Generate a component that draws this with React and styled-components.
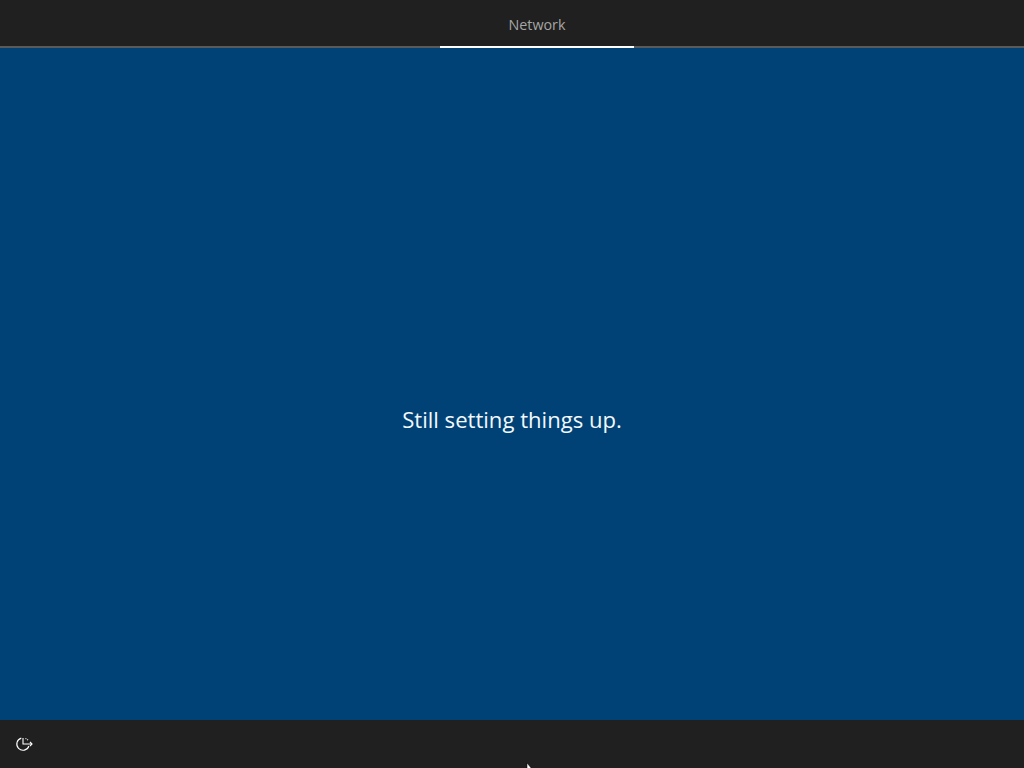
import React from 'react';
import styled, { createGlobalStyle } from 'styled-components';

const GlobalStyle = createGlobalStyle`
  html, body {
    margin: 0;
    padding: 0;
    background: #202020;
  }
`;

const Page = styled.div`
  position: relative;
  width: 1024px;
  height: 768px;
  display: flex;
  flex-direction: column;
  overflow: hidden;
  font-family: "Open Sans", "Noto Sans", "Liberation Sans", sans-serif;
`;

const TopBar = styled.header`
  height: 46px;
  flex: none;
  display: flex;
  padding-left: 440px;
  background: #202020;
  border-bottom: 2px solid #5a5a5a;
`;

const Tab = styled.div`
  width: 194px;
  height: 48px;
  box-sizing: border-box;
  display: flex;
  align-items: center;
  justify-content: center;
  padding-top: 2px;
  font-size: 14.3px;
  color: #a6a6a6;
  border-bottom: 2px solid ${(p) => (p.$active ? '#ffffff' : 'transparent')};
`;

const Main = styled.main`
  flex: 1;
  display: flex;
  align-items: center;
  justify-content: center;
  padding-top: 70px;
  box-sizing: border-box;
  background: #004275;
`;

const Message = styled.h1`
  margin: 0;
  font-size: 22.1px;
  font-weight: 400;
  line-height: 30px;
  color: #f2f8fc;
`;

const BottomBar = styled.footer`
  height: 48px;
  flex: none;
  display: flex;
  align-items: center;
  padding-left: 15px;
  background: #202020;
`;

const IconButton = styled.button`
  width: 18px;
  height: 18px;
  padding: 0;
  border: 0;
  background: none;
  display: flex;
  color: #ffffff;
`;

const Cursor = styled.svg`
  position: absolute;
  left: 526px;
  top: 763px;
`;

const EaseOfAccessIcon = () => (
  <svg width="18" height="18" viewBox="0 0 18 18" fill="none" stroke="currentColor" strokeWidth="1.1">
    <path d="M13.9 11a6.2 6.2 0 1 1-7.6-7.9" />
    <path d="M8 3v6h9" />
    <path d="M15 7l2 2-2 2" />
    <path d="M10.5 3.4l2.6 1.6" strokeDasharray="1 1" />
  </svg>
);

const App = () => (
  <Page>
    <GlobalStyle />
    <TopBar>
      <Tab $active>Network</Tab>
    </TopBar>
    <Main>
      <Message>Still setting things up.</Message>
    </Main>
    <BottomBar>
      <IconButton aria-label="Accessibility">
        <EaseOfAccessIcon />
      </IconButton>
    </BottomBar>
    <Cursor width="10" height="6" viewBox="0 0 10 6">
      <path d="M1 0v6h5z" fill="#ffffff" stroke="#000000" strokeWidth="0.5" />
    </Cursor>
  </Page>
);

export default App;
